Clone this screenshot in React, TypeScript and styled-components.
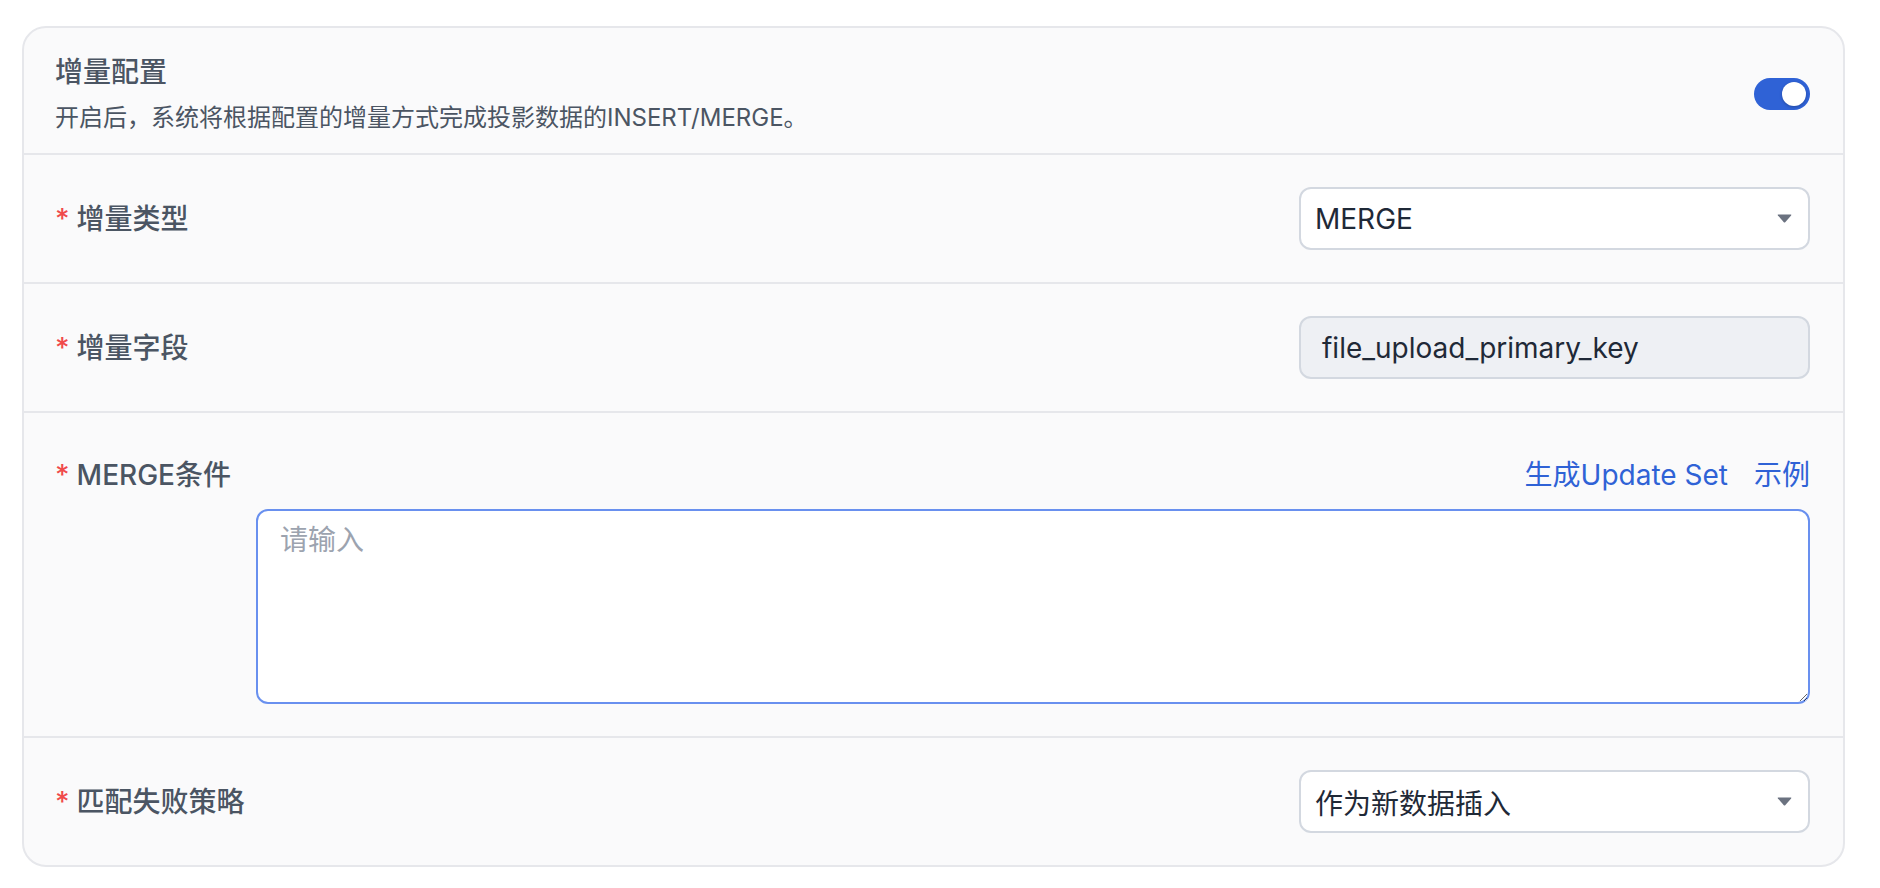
import React from "react";
import styled, { createGlobalStyle } from "styled-components";

const GlobalStyle = createGlobalStyle`
  html, body {
    margin: 0;
    padding: 0;
    background: #ffffff;
  }
  body {
    font-family: "Inter", "Noto Sans CJK SC", sans-serif;
    -webkit-font-smoothing: antialiased;
  }
`;

const Page = styled.div`
  padding: 26px 35px 20px 22px;
`;

const Card = styled.div`
  background: #fafafb;
  border: 2px solid #e6e7eb;
  border-radius: 24px;
  overflow: hidden;
`;

const Header = styled.div`
  display: flex;
  align-items: center;
  justify-content: space-between;
  padding: 25px 33px 18px 31px;
`;

const HeaderText = styled.div`
  display: flex;
  flex-direction: column;
  gap: 10px;
`;

const Title = styled.div`
  font-size: 28px;
  line-height: 38px;
  font-weight: 500;
  color: #4b5563;
`;

const Description = styled.div`
  font-size: 24px;
  line-height: 34px;
  color: #4b5563;
`;

const Toggle = styled.button<{ $on: boolean }>`
  width: 56px;
  height: 32px;
  padding: 0 4px;
  border: none;
  border-radius: 16px;
  background: ${(p) => (p.$on ? "#2f62d6" : "#d1d5db")};
  display: flex;
  align-items: center;
  justify-content: ${(p) => (p.$on ? "flex-end" : "flex-start")};
  cursor: pointer;
`;

const Knob = styled.span`
  width: 24px;
  height: 24px;
  border-radius: 50%;
  background: #ffffff;
  box-shadow: 0 1px 3px rgba(0, 0, 0, 0.25);
`;

const Row = styled.div`
  display: flex;
  align-items: center;
  justify-content: space-between;
  border-top: 2px solid #e6e7eb;
  padding: 32px 33px 32px 31px;
`;

const Label = styled.div`
  display: flex;
  align-items: center;
  font-size: 28px;
  line-height: 40px;
  font-weight: 500;
  color: #4b5563;
  white-space: nowrap;
`;

const Required = styled.span`
  color: #f04a4a;
  margin-right: 7px;
`;

const Field = styled.div<{ $disabled?: boolean }>`
  box-sizing: border-box;
  width: 511px;
  height: 63px;
  display: flex;
  align-items: center;
  justify-content: space-between;
  padding: 0 16px 0 ${(p) => (p.$disabled ? "21px" : "14px")};
  border: 2px solid #d3d8e0;
  border-radius: 12px;
  background: ${(p) => (p.$disabled ? "#eef0f4" : "#ffffff")};
  font-size: 28px;
  color: #1f2937;
`;

const ConditionRow = styled.div`
  display: grid;
  grid-template-columns: 201px 1fr;
  grid-template-rows: 60px 195px;
  row-gap: 4px;
  border-top: 2px solid #e6e7eb;
  padding: 32px 33px 32px 31px;
`;

const Links = styled.div`
  display: flex;
  align-items: center;
  justify-content: flex-end;
  gap: 26px;
`;

const LinkButton = styled.a`
  font-size: 28px;
  line-height: 40px;
  color: #2f62d6;
  text-decoration: none;
  cursor: pointer;
`;

const TextArea = styled.textarea`
  grid-column: 2;
  box-sizing: border-box;
  width: 100%;
  height: 195px;
  padding: 9px 22px;
  border: 2px solid #6990ef;
  border-radius: 12px;
  background: #ffffff;
  font-family: "Inter", "Noto Sans CJK SC", sans-serif;
  font-size: 28px;
  line-height: 40px;
  color: #1f2937;
  resize: vertical;
  outline: none;
  &::placeholder {
    color: #9ca3af;
  }
`;

const Caret = () => (
  <svg width="15" height="9" viewBox="0 0 15 9">
    <path d="M1.2 0.5 H13.8 Q14.8 0.5 14.1 1.4 L8.2 8.2 Q7.5 9 6.8 8.2 L0.9 1.4 Q0.2 0.5 1.2 0.5 Z" fill="#6b7280" />
  </svg>
);

const RequiredLabel = ({ children }: { children: React.ReactNode }) => (
  <Label>
    <Required>*</Required>
    {children}
  </Label>
);

export default function App() {
  return (
    <Page>
      <GlobalStyle />
      <Card>
        <Header>
          <HeaderText>
            <Title>增量配置</Title>
            <Description>开启后，系统将根据配置的增量方式完成投影数据的INSERT/MERGE。</Description>
          </HeaderText>
          <Toggle $on={true} aria-label="toggle">
            <Knob />
          </Toggle>
        </Header>

        <Row>
          <RequiredLabel>增量类型</RequiredLabel>
          <Field>
            <span>MERGE</span>
            <Caret />
          </Field>
        </Row>

        <Row>
          <RequiredLabel>增量字段</RequiredLabel>
          <Field $disabled>
            <span>file_upload_primary_key</span>
          </Field>
        </Row>

        <ConditionRow>
          <RequiredLabel>MERGE条件</RequiredLabel>
          <Links>
            <LinkButton>生成Update Set</LinkButton>
            <LinkButton>示例</LinkButton>
          </Links>
          <TextArea placeholder="请输入" />
        </ConditionRow>

        <Row>
          <RequiredLabel>匹配失败策略</RequiredLabel>
          <Field>
            <span>作为新数据插入</span>
            <Caret />
          </Field>
        </Row>
      </Card>
    </Page>
  );
}
